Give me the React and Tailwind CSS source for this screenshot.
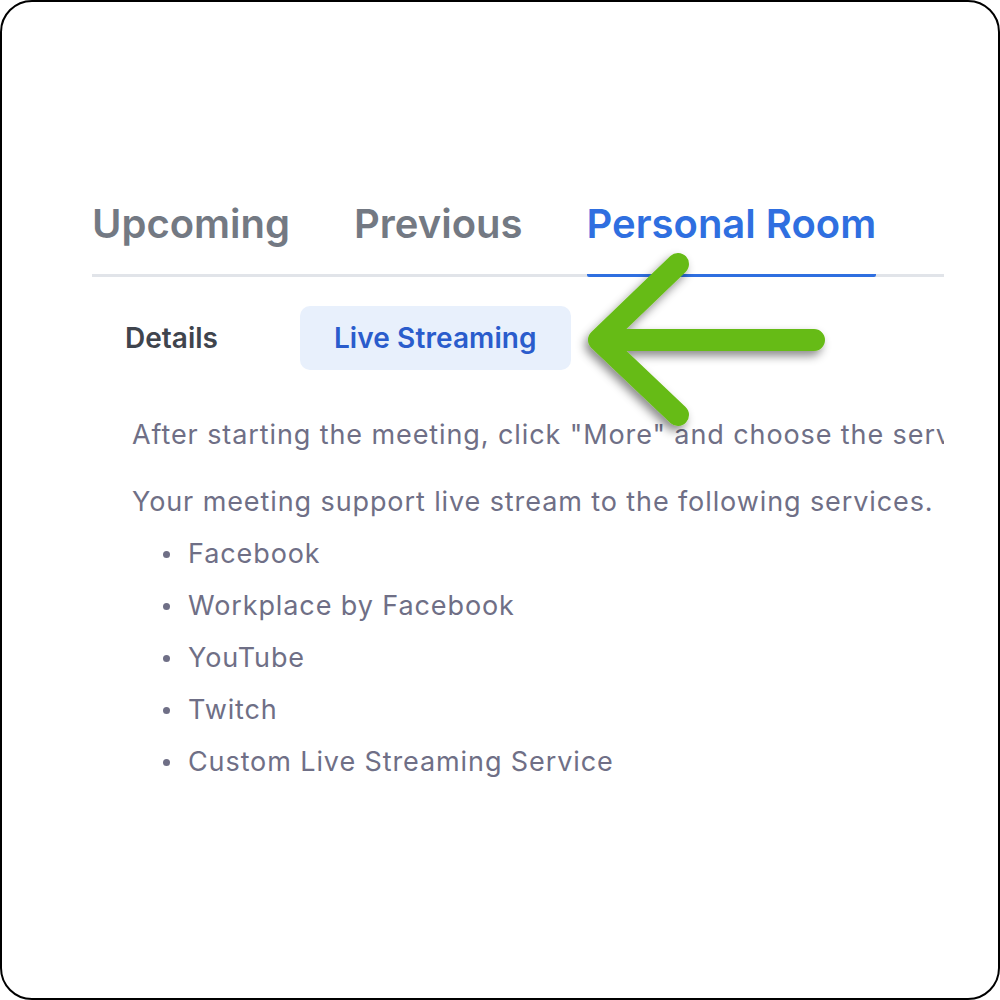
const tabs = ['Upcoming', 'Previous', 'Personal Room'];
const services = ['Facebook', 'Workplace by Facebook', 'YouTube', 'Twitch', 'Custom Live Streaming Service'];

function Arrow() {
  return (
    <svg className="absolute left-0 top-0 pointer-events-none" width="1000" height="1000" viewBox="0 0 1000 1000">
      <defs>
        <filter id="arrowShadow" x="-20%" y="-20%" width="140%" height="140%">
          <feDropShadow dx="-3" dy="5" stdDeviation="5" floodColor="#000" floodOpacity="0.45" />
        </filter>
      </defs>
      <g filter="url(#arrowShadow)" fill="none" stroke="#66bb14" strokeWidth="22" strokeLinecap="round" strokeLinejoin="round">
        <path d="M676 262 L597 338 L676 413 M597 338 L812 338" />
      </g>
    </svg>
  );
}

export default function App() {
  return (
    <div className="relative w-[1000px] h-[1000px] bg-white border-2 border-black rounded-[32px] overflow-hidden" style={{ fontFamily: 'Inter, "Noto Sans", sans-serif' }}>
      <div className="ml-[90px] mt-[198px] w-[852px] overflow-hidden">
        {/* Main tabs */}
        <div className="flex gap-[64px] border-b-[3px] border-[#e1e4e9]">
          {tabs.map((t, i) => (
            <div
              key={t}
              className={
                i === 2
                  ? 'text-[40px] leading-[48px] font-semibold text-[#2f6fe0] pb-[26px] -mb-[3px] border-b-[3px] border-[#2f6fe0] rounded-[2px]'
                  : 'text-[40px] leading-[48px] font-semibold text-[#737983] pb-[26px]'
              }
            >
              {t}
            </div>
          ))}
        </div>

        {/* Sub tabs */}
        <div className="flex gap-[49px] mt-[29px]">
          <div className="h-16 px-[33px] flex items-center rounded-[10px] text-[28px] font-semibold text-[#3f444d]">Details</div>
          <div className="h-16 px-[34px] flex items-center rounded-[10px] bg-[#e8f0fc] text-[28px] font-semibold text-[#2a5ccc] tracking-[0.1px]">Live Streaming</div>
        </div>

        {/* Content */}
        <div className="pl-[40px] text-[27px] text-[#6f6f86] tracking-[0.9px]">
          <p className="mt-[45px] leading-[40px] whitespace-nowrap">After starting the meeting, click "More" and choose the service to start live streaming.</p>
          <p className="mt-[27px] leading-[40px] whitespace-nowrap">Your meeting support live stream to the following services.</p>
          <ul className="mt-[6px]">
            {services.map((s) => (
              <li key={s} className="flex items-center h-[52px] whitespace-nowrap">
                <span className="w-[7px] h-[7px] rounded-full bg-[#6f6f86] ml-[31px] mr-[18px]" />
                {s}
              </li>
            ))}
          </ul>
        </div>
      </div>
      <Arrow />
    </div>
  );
}
